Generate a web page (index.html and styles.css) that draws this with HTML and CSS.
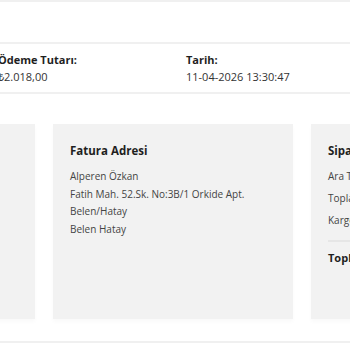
FILE: index.html
```html
<!DOCTYPE html>
<html lang="tr">
<head>
    <meta charset="UTF-8">
    <meta name="viewport" content="width=device-width, initial-scale=1.0">
    <title>Sipariş Detayı</title>
    <link rel="stylesheet" href="styles.css">
</head>
<body>
    <div class="page">
        <div class="rule"></div>

        <div class="summary">
            <div class="summary-item">
                <span class="label">Ödeme Tutarı:</span>
                <span class="value">₺2.018,00</span>
            </div>
            <div class="summary-item">
                <span class="label">Tarih:</span>
                <span class="value">11-04-2026 13:30:47</span>
            </div>
        </div>

        <div class="cards">
            <div class="card"></div>
            <div class="card">
                <h3>Fatura Adresi</h3>
                <p>Alperen Özkan</p>
                <p>Fatih Mah. 52.Sk. No:3B/1 Orkide Apt.</p>
                <p>Belen/Hatay</p>
                <p>Belen Hatay</p>
            </div>
            <div class="card totals">
                <h3>Sipariş Özeti</h3>
                <div class="line"><span>Ara Toplam</span><span>₺2.018,00</span></div>
                <div class="line"><span>Toplam İndirim</span><span>₺0,00</span></div>
                <div class="line"><span>Kargo Ücreti</span><span>₺0,00</span></div>
                <div class="line total"><span>Toplam</span><span>₺2.018,00</span></div>
            </div>
        </div>

        <div class="rule bottom"></div>
    </div>
</body>
</html>
```

FILE: styles.css
```css
:root {
    --text-dark: #1f1f1f;
    --text-body: #444;
    --card-bg: #f2f2f2;
    --rule-color: #f0f0f0;
}

body {
    margin: 0;
    font-family: "Open Sans", Arial, sans-serif;
    color: var(--text-dark);
    background: #fff;
    overflow: hidden;
}

.page {
    margin-left: -205px;
    width: 780px;
}

.rule {
    height: 2px;
    background: var(--rule-color);
}

.rule.bottom {
    margin-top: 16px;
}

.summary {
    display: flex;
    margin-top: 40px;
    padding: 7px 0 7px 203px;
    border-top: 2px solid var(--rule-color);
    border-bottom: 2px solid var(--rule-color);
}

.summary-item {
    width: 188px;
    display: flex;
    flex-direction: column;
}

.label {
    font-size: 11px;
    font-weight: 700;
    line-height: 17px;
}

.value {
    font-size: 11px;
    line-height: 17px;
    color: #333;
}

.cards {
    display: flex;
    gap: 18px;
    margin-top: 30px;
    padding-bottom: 6px;
}

.card {
    width: 240px;
    height: 195px;
    box-sizing: border-box;
    padding: 18px 17px;
    background: var(--card-bg);
    box-shadow: 0 3px 4px rgba(0, 0, 0, 0.025);
}

.card h3 {
    margin: 0 0 8px;
    font-size: 11.5px;
    font-weight: 700;
    line-height: 18px;
    color: var(--text-dark);
}

.card.totals h3 {
    margin-bottom: 5px;
}

.card p {
    margin: 0;
    font-size: 10px;
    line-height: 17.5px;
    color: var(--text-body);
}

.line {
    display: flex;
    justify-content: space-between;
    font-size: 10px;
    line-height: 22px;
    color: var(--text-body);
}

.line.total {
    margin-top: 9px;
    padding-top: 7px;
    border-top: 2px solid #e6e6e6;
    font-weight: 700;
    font-size: 11px;
    line-height: 18px;
    color: var(--text-dark);
}
```
